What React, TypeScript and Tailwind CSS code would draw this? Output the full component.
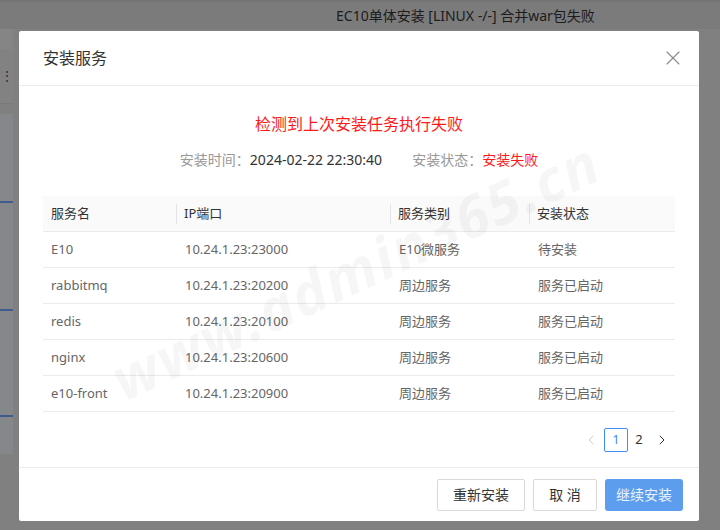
import { X, ChevronLeft, ChevronRight } from 'lucide-react'

const FONT = { fontFamily: '"Noto Sans", "Noto Sans CJK SC", sans-serif' }

const ROWS = [
  { name: 'E10', ip: '10.24.1.23:23000', type: 'E10微服务', status: '待安装' },
  { name: 'rabbitmq', ip: '10.24.1.23:20200', type: '周边服务', status: '服务已启动' },
  { name: 'redis', ip: '10.24.1.23:20100', type: '周边服务', status: '服务已启动' },
  { name: 'nginx', ip: '10.24.1.23:20600', type: '周边服务', status: '服务已启动' },
  { name: 'e10-front', ip: '10.24.1.23:20900', type: '周边服务', status: '服务已启动' },
]

const COLS = 'grid grid-cols-[133px_214px_139px_146px]'

export default function App() {
  return (
    <div className="relative w-[720px] h-[530px] overflow-hidden bg-[#808080]" style={FONT}>
      {/* page behind the overlay */}
      <div className="h-[29px] bg-[#7b7b7b] border-t-2 border-[#737373] flex items-center pl-[336px] text-[14px] text-[#1c1c1c]">
        EC10单体安装 [LINUX -/-] 合并war包失败
      </div>
      <div className="w-[13px] flex flex-col">
        <div className="h-[20px] bg-[#858585]" />
        <div className="h-[55px] bg-[#828282] border-b border-[#7a7a7a] flex items-center text-[#333] text-[14px] leading-none">⋮</div>
        <div className="h-[10px]" />
        <div className="h-[340px] bg-[#86878b] flex flex-col">
          <div className="h-[87px]" />
          <div className="h-[2px] bg-[#3e5c8f]" />
          <div className="h-[106px]" />
          <div className="h-[2px] bg-[#3e5c8f]" />
          <div className="h-[104px]" />
          <div className="h-[2px] bg-[#3e5c8f]" />
        </div>
      </div>

      {/* modal */}
      <div className="absolute left-[19px] top-[31px] w-[680px] h-[490px] bg-white flex flex-col rounded-[2px] overflow-hidden">
        <div className="h-[55px] flex items-center justify-between pl-[24px] pr-[14px] border-b border-[#ebebeb]">
          <span className="text-[16px] text-[#333]">安装服务</span>
          <X size={24} strokeWidth={1.1} className="text-[#8a8a8a]" />
        </div>

        <div className="flex-1 px-[24px] flex flex-col">
          <div className="mt-[27px] text-center text-[16px] text-[#ff1a1a] leading-[22px]">检测到上次安装任务执行失败</div>
          <div className="mt-[15px] flex justify-center text-[14px] leading-[20px]">
            <span className="text-[#999]">安装时间：</span>
            <span className="text-[#333]">2024-02-22 22:30:40</span>
            <span className="text-[#999] ml-[30px]">安装状态：</span>
            <span className="text-[#ff1a1a]">安装失败</span>
          </div>

          <div className="mt-[26px] w-[632px] text-[13px]">
            <div className={`${COLS} h-[36px] bg-[#fafafa] border-b border-[#ebebeb] text-[#333]`}>
              {['服务名', 'IP端口', '服务类别', '安装状态'].map((h, i) => (
                <div key={h} className="flex items-center pl-[8px] relative">
                  {i > 0 && <div className="absolute left-0 top-[8px] h-[20px] w-px bg-[#e5e5e5]" />}
                  {h}
                </div>
              ))}
            </div>
            {ROWS.map((r) => (
              <div key={r.name} className={`${COLS} h-[36px] border-b border-[#ebebeb] text-[#666]`}>
                <div className="flex items-center pl-[8px]">{r.name}</div>
                <div className="flex items-center pl-[9px]">{r.ip}</div>
                <div className="flex items-center pl-[9px]">{r.type}</div>
                <div className="flex items-center pl-[9px]">{r.status}</div>
              </div>
            ))}
          </div>

          <div className="mt-[16px] flex justify-end items-center pr-[1px] text-[13px]">
            <div className="w-[24px] flex justify-center">
              <ChevronLeft size={16} strokeWidth={1.3} className="text-[#c4c4c4]" />
            </div>
            <div className="ml-[1px] w-[24px] h-[24px] border border-[#3d8ef5] rounded-[2px] flex items-center justify-center text-[#3d8ef5]">1</div>
            <div className="w-[22px] text-center text-[#333]">2</div>
            <div className="w-[24px] flex justify-center">
              <ChevronRight size={16} strokeWidth={1.5} className="text-[#333]" />
            </div>
          </div>
        </div>

        <div className="h-[54px] border-t border-[#ebebeb] flex items-center justify-end gap-[8px] pr-[16px] text-[14px]">
          <button className="h-[32px] w-[88px] border border-[#d9d9d9] rounded-[2px] text-[#333] bg-white">重新安装</button>
          <button className="h-[32px] w-[64px] border border-[#d9d9d9] rounded-[2px] text-[#333] bg-white">取 消</button>
          <button className="h-[32px] w-[78px] rounded-[3px] bg-[#5c9ded] text-[#eaf3ff]">继续安装</button>
        </div>

        {/* watermark */}
        <div className="absolute left-[96px] top-[322px] -rotate-[25deg] origin-left text-[58px] leading-none font-bold italic tracking-[2px] whitespace-nowrap text-black/[0.035] pointer-events-none select-none">
          www.admin365.cn
        </div>
      </div>
    </div>
  )
}
